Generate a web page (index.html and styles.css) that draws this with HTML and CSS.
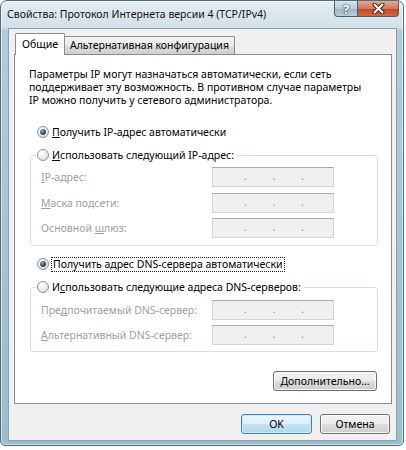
FILE: index.html
```html
<!DOCTYPE html>
<html lang="ru">
<head>
    <meta charset="UTF-8">
    <meta name="viewport" content="width=device-width, initial-scale=1.0">
    <title>Свойства: Протокол Интернета версии 4 (TCP/IPv4)</title>
    <link rel="stylesheet" href="styles.css">
</head>
<body>

<div class="window">
    <div class="titlebar">
        <span class="title">Свойства: Протокол Интернета версии 4 (TCP/IPv4)</span>
        <div class="caption-buttons">
            <span class="cap-btn help">?</span>
            <span class="cap-btn close">
                <svg width="13" height="11" viewBox="0 0 13 11">
                    <path d="M2.5 1.5 L10.5 9.5 M10.5 1.5 L2.5 9.5" stroke="#4a2418" stroke-width="4" stroke-linecap="round"/>
                    <path d="M2.5 1.5 L10.5 9.5 M10.5 1.5 L2.5 9.5" stroke="#fff" stroke-width="2" stroke-linecap="round"/>
                </svg>
            </span>
        </div>
    </div>

    <div class="client">
        <div class="tabs">
            <div class="tab active">Общие</div>
            <div class="tab">Альтернативная конфигурация</div>
        </div>

        <div class="panel">
            <p class="intro">Параметры IP могут назначаться автоматически, если сеть<br>поддерживает эту возможность. В противном случае параметры<br>IP можно получить у сетевого администратора.</p>

            <div class="option first">
                <span class="radio checked"></span>
                <span><u>П</u>олучить IP-адрес автоматически</span>
            </div>

            <fieldset class="group">
                <legend>
                    <span class="option">
                        <span class="radio"></span>
                        <span><u>И</u>спользовать следующий IP-адрес:</span>
                    </span>
                </legend>
                <div class="fields">
                    <label class="field-label"><u>I</u>P-адрес:</label>
                    <div class="ip-box"><span>.</span><span>.</span><span>.</span></div>
                    <label class="field-label"><u>М</u>аска подсети:</label>
                    <div class="ip-box"><span>.</span><span>.</span><span>.</span></div>
                    <label class="field-label">Основной <u>ш</u>люз:</label>
                    <div class="ip-box"><span>.</span><span>.</span><span>.</span></div>
                </div>
            </fieldset>

            <div class="option dns">
                <span class="radio checked"></span>
                <span class="focused">Получить адрес DNS-сервера автоматически</span>
            </div>

            <fieldset class="group second">
                <legend>
                    <span class="option">
                        <span class="radio"></span>
                        <span>И<u>с</u>пользовать следующие адреса DNS-серверов:</span>
                    </span>
                </legend>
                <div class="fields">
                    <label class="field-label">Пре<u>д</u>почитаемый DNS-сервер:</label>
                    <div class="ip-box"><span>.</span><span>.</span><span>.</span></div>
                    <label class="field-label"><u>А</u>льтернативный DNS-сервер:</label>
                    <div class="ip-box"><span>.</span><span>.</span><span>.</span></div>
                </div>
            </fieldset>

            <div class="advanced-row">
                <button class="btn advanced"><u>Д</u>ополнительно...</button>
            </div>
        </div>

        <div class="footer">
            <button class="btn default">OK</button>
            <button class="btn">Отмена</button>
        </div>
    </div>
</div>

</body>
</html>
```

FILE: styles.css
```css
* {
    box-sizing: border-box;
}
body {
    margin: 0;
    background: #fff;
    font-family: "Noto Sans", "Open Sans", sans-serif;
    font-size: 10.5px;
    color: #000;
}
u {
    text-underline-offset: 1px;
}

/* window frame */
.window {
    width: 404px;
    height: 446px;
    border: 1px solid #4e6f7e;
    border-radius: 7px 7px 5px 5px;
    background: linear-gradient(180deg, #e4edf2 0, #d2e0e8 27px, #b4cbd7 29px, #9dbccb 100%);
    box-shadow: inset 0 0 0 1px rgba(255, 255, 255, 0.55);
    display: flex;
    flex-direction: column;
}
.titlebar {
    height: 27px;
    display: flex;
    justify-content: space-between;
    align-items: flex-start;
    padding-left: 6px;
}
.title {
    font-size: 10.5px;
    line-height: 14px;
    margin-top: 6px;
    color: #111;
}
.caption-buttons {
    display: flex;
    margin-right: 4px;
}
.cap-btn {
    height: 16px;
    display: flex;
    align-items: center;
    justify-content: center;
    border: 1px solid #4a5f6c;
    border-top: none;
}
.help {
    width: 24px;
    border-radius: 0 0 0 4px;
    background: linear-gradient(#dae5eb, #b9cbd6 50%, #9bb3c1 51%, #bdd0db);
    color: #fff;
    font-weight: bold;
    font-size: 13px;
    line-height: 14px;
    text-shadow: 0 0 1px #1f3442, 0 0 2px #1f3442;
}
.close {
    width: 41px;
    border-left: none;
    border-radius: 0 0 4px 0;
    background: linear-gradient(#e6a792, #d27a5c 50%, #bf4628 51%, #d26744);
}

/* client area */
.client {
    flex: 1;
    margin: 0 6px 4px 7px;
    background: #f0f0f0;
    border: 1px solid #8b9eab;
    padding: 4px 4px 0 5px;
    display: flex;
    flex-direction: column;
}
.tabs {
    display: flex;
    align-items: flex-end;
    height: 22px;
    margin-bottom: -1px;
    position: relative;
    z-index: 1;
}
.tab {
    border: 1px solid #898c95;
    white-space: nowrap;
}
.tab.active {
    height: 22px;
    margin-left: 1px;
    padding: 3px 6px 0 6px;
    background: #fff;
    border-bottom: none;
    border-radius: 2px 2px 0 0;
}
.tab:not(.active) {
    height: 18px;
    margin-bottom: 1px;
    padding: 1px 5px 0 5px;
    border-left: none;
    border-bottom: none;
    border-radius: 0 2px 0 0;
    background: linear-gradient(#f3f3f3, #ebebeb 50%, #dddddd 51%, #cfcfcf);
}
.panel {
    height: 350px;
    background: #fff;
    border: 1px solid #898c95;
    padding: 13px 13px 0 14px;
}
.intro {
    margin: 0;
    line-height: 13px;
}

/* radio options */
.option {
    display: inline-flex;
    align-items: center;
    gap: 3px;
    height: 14px;
    line-height: 14px;
    white-space: nowrap;
}
.option.first,
.option.dns {
    display: flex;
    margin-left: 8px;
}
.option.first {
    margin-top: 18px;
}
.option.dns {
    margin-top: 11px;
}
.radio {
    width: 12px;
    height: 12px;
    border-radius: 50%;
    border: 1px solid #8e9398;
    background: radial-gradient(circle at 35% 30%, #ffffff 0, #f1f1f1 40%, #cfd3d6 100%);
    display: flex;
    align-items: center;
    justify-content: center;
    flex: none;
}
.radio.checked::after {
    content: "";
    width: 6px;
    height: 6px;
    border-radius: 50%;
    background: radial-gradient(circle at 35% 30%, #8fa8b8 0, #3a4f5e 55%, #1b2a35 100%);
}
.focused {
    outline: 1px dotted #222;
    line-height: 13px;
    padding: 0 1px;
}

/* group boxes */
.group {
    margin: 9px 0 0 1px;
    width: 348px;
    border: 1px solid #d5dfe5;
    border-radius: 3px;
    padding: 5px 10px 7px 10px;
}
.group.second {
    padding-top: 6px;
    padding-bottom: 6px;
}
.group legend {
    margin-left: -5px;
    padding: 0 3px 0 1px;
    height: 14px;
}
.fields {
    display: grid;
    grid-template-columns: 171px 122px;
    row-gap: 5.5px;
    align-items: center;
}
.group.second .fields {
    row-gap: 5px;
}
.field-label {
    color: #a0a0a0;
    white-space: nowrap;
}
.ip-box {
    height: 20px;
    border: 1px solid #d4d4d4;
    border-top-color: #ababab;
    background: #f0f0f0;
    display: flex;
    padding-left: 31px;
    color: #8a8a8a;
    line-height: 17px;
}
.ip-box span {
    width: 28.5px;
}

/* buttons */
.btn {
    font: inherit;
    height: 20px;
    padding: 0;
    color: #000;
    border: 1px solid #707070;
    border-radius: 3px;
    background: linear-gradient(#f2f2f2 0%, #ebebeb 50%, #dddddd 51%, #cfcfcf 100%);
    box-shadow: inset 0 0 0 1px rgba(255, 255, 255, 0.75);
}
.btn.default {
    border-color: #3c7fb1;
    background: linear-gradient(#eaf6fd 0%, #dcf0fb 50%, #c4e3f4 51%, #b0d6ec 100%);
    box-shadow: inset 0 0 0 1px #cfeafa;
}
.advanced-row {
    display: flex;
    justify-content: flex-end;
    margin: 19px 1px 0 0;
}
.btn.advanced {
    width: 104px;
}
.footer {
    display: flex;
    justify-content: flex-end;
    gap: 8px;
    margin: 10px 2px 0 0;
}
.footer .btn {
    width: 71px;
}
.footer .btn + .btn {
    width: 70px;
}
```
